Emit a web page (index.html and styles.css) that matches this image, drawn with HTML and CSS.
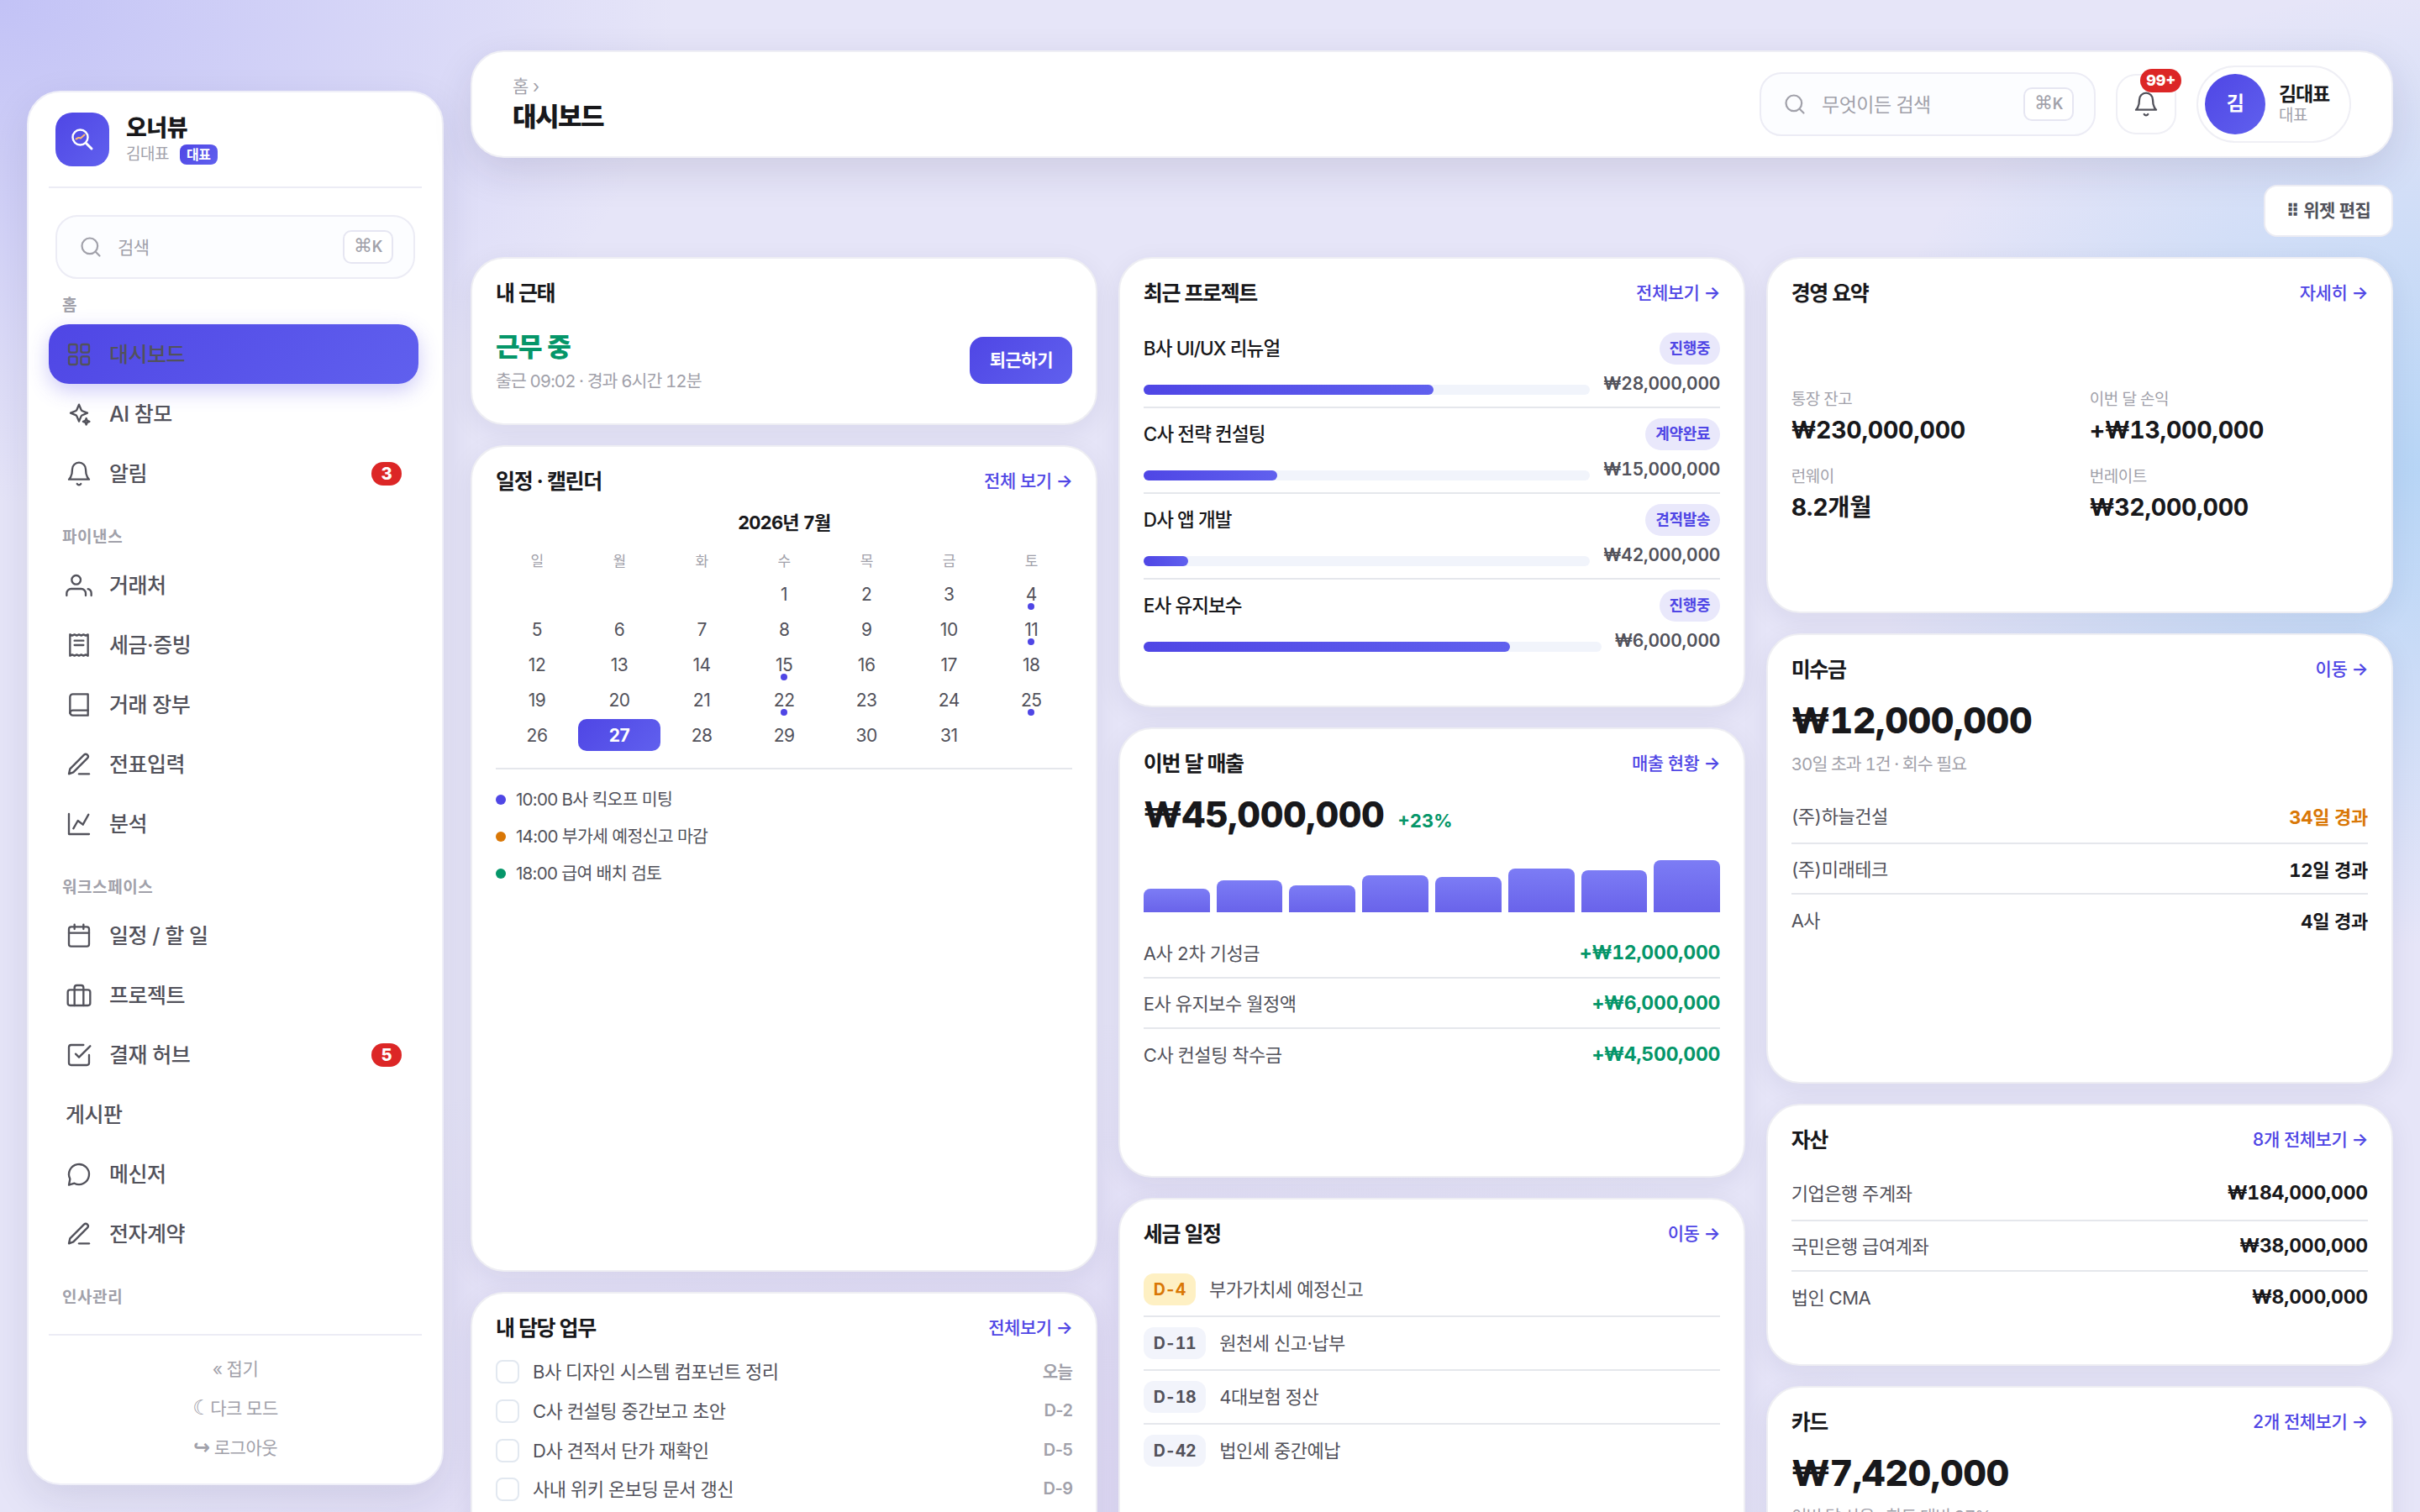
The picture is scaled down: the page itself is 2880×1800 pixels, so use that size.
FILE: index.html
```html
<!DOCTYPE html>
<html lang="ko">

<head>
    <meta charset="UTF-8">
    <meta name="viewport" content="width=device-width, initial-scale=1.0">
    <title>오너뷰 - 대시보드</title>
    <link rel="stylesheet" href="styles.css">
</head>

<body>
    <div class="app">
        <aside class="sidebar">
            <div class="brand">
                <div class="brand-logo">
                    <svg viewBox="0 0 32 32" fill="none" stroke-linecap="round" stroke-linejoin="round">
                        <circle cx="13.5" cy="13.5" r="9" stroke="#fff" stroke-width="2.4" />
                        <path d="M20.5 20.5l6.5 6.5" stroke="#fff" stroke-width="3" />
                        <path d="M8.5 15.5l3-1.6 2.5.6 4.5-4" stroke="#fdba74" stroke-width="2" />
                    </svg>
                </div>
                <div class="brand-text">
                    <div class="brand-name">오너뷰</div>
                    <div class="brand-user">김대표 <span class="role">대표</span></div>
                </div>
            </div>

            <div class="side-search">
                <svg class="search-icon" viewBox="0 0 24 24"><circle cx="11" cy="11" r="8" /><path d="m21 21-4.3-4.3" /></svg>
                <span>검색</span>
                <kbd><i>⌘</i>K</kbd>
            </div>

            <nav class="nav">
                <div class="nav-label first">홈</div>
                <a class="nav-item active">
                    <svg class="icon" viewBox="0 0 24 24"><rect x="3" y="3" width="7.2" height="7.2" rx="1.5" /><rect x="13.8" y="3" width="7.2" height="7.2" rx="1.5" /><rect x="3" y="13.8" width="7.2" height="7.2" rx="1.5" /><rect x="13.8" y="13.8" width="7.2" height="7.2" rx="1.5" /></svg>
                    <span>대시보드</span>
                </a>
                <a class="nav-item">
                    <svg class="icon" viewBox="0 0 24 24"><path d="M12 3.5l1.9 4.6a2 2 0 0 0 1.1 1.1L19.5 11 15 12.9a2 2 0 0 0-1.1 1.1L12 18.5 10.1 14A2 2 0 0 0 9 12.9L4.5 11 9 9.2a2 2 0 0 0 1.100-1.100z" /><path d="M18.500 15.800l.8 2 2 .8-2 .8-.8 2-.8-2-2-.8 2-.8z" /></svg>
                    <span>AI 참모</span>
                </a>
                <a class="nav-item">
                    <svg class="icon" viewBox="0 0 24 24"><path d="M6 8a6 6 0 0 1 12 0c0 7 3 9 3 9H3s3-2 3-9" /><path d="M10.3 21a1.94 1.94 0 0 0 3.4 0" /></svg>
                    <span>알림</span>
                    <b class="count">3</b>
                </a>

                <div class="nav-label">파이낸스</div>
                <a class="nav-item">
                    <svg class="icon" viewBox="0 0 24 24"><path d="M18 21v-2a4 4 0 0 0-4-4H5a4 4 0 0 0-4 4v2" /><circle cx="9.5" cy="7" r="4" /><path d="M23 21v-2a4 4 0 0 0-3-3.87" /></svg>
                    <span>거래처</span>
                </a>
                <a class="nav-item">
                    <svg class="icon" viewBox="0 0 24 24"><path d="M4 2.5v19l2-1 2 1 2-1 2 1 2-1 2 1 2-1 2 1v-19l-2 1-2-1-2 1-2-1-2 1-2-1-2 1z" /><path d="M8 8h8M8 12h8" /></svg>
                    <span>세금·증빙</span>
                </a>
                <a class="nav-item">
                    <svg class="icon" viewBox="0 0 24 24"><path d="M4 19.5A2.5 2.5 0 0 1 6.5 17H20" /><path d="M6.5 2.5H20v19H6.5A2.5 2.5 0 0 1 4 19V5a2.5 2.5 0 0 1 2.500-2.500z" /></svg>
                    <span>거래 장부</span>
                </a>
                <a class="nav-item">
                    <svg class="icon" viewBox="0 0 24 24"><path d="M12 20.5h9" /><path d="M16.5 3.5a2.12 2.12 0 0 1 3 3L7 19l-4 1.5 1-4.5z" /></svg>
                    <span>전표입력</span>
                </a>
                <a class="nav-item">
                    <svg class="icon" viewBox="0 0 24 24"><path d="M3 3v18h18" /><path d="m7 16 4-7 4.5 3.5L20.5 3.5" /></svg>
                    <span>분석</span>
                </a>

                <div class="nav-label">워크스페이스</div>
                <a class="nav-item">
                    <svg class="icon" viewBox="0 0 24 24"><rect x="3" y="4" width="18" height="17.5" rx="2" /><path d="M8 2v4M16 2v4M3 9.5h18" /></svg>
                    <span>일정 / 할 일</span>
                </a>
                <a class="nav-item">
                    <svg class="icon" viewBox="0 0 24 24"><rect x="2" y="7" width="20" height="14" rx="2" /><path d="M16 21V5a2 2 0 0 0-2-2h-4a2 2 0 0 0-2 2v16" /></svg>
                    <span>프로젝트</span>
                </a>
                <a class="nav-item">
                    <svg class="icon" viewBox="0 0 24 24"><path d="m9 11 3 3L22 4" /><path d="M21 12v7a2 2 0 0 1-2 2H5a2 2 0 0 1-2-2V5a2 2 0 0 1 2-2h11" /></svg>
                    <span>결재 허브</span>
                    <b class="count">5</b>
                </a>
                <a class="nav-item"><span>게시판</span></a>
                <a class="nav-item">
                    <svg class="icon" viewBox="0 0 24 24"><path d="M7.9 20A9 9 0 1 0 4 16.1L3 21.5z" /></svg>
                    <span>메신저</span>
                </a>
                <a class="nav-item">
                    <svg class="icon" viewBox="0 0 24 24"><path d="M12 20.5h9" /><path d="M16.5 3.5a2.12 2.12 0 0 1 3 3L7 19l-4 1.5 1-4.5z" /></svg>
                    <span>전자계약</span>
                </a>
                <div class="nav-label">인사관리</div>
            </nav>

            <div class="side-footer">
                <a>« 접기</a>
                <a><i class="moon">☾</i>다크 모드</a>
                <a><i class="exit">↪</i> 로그아웃</a>
            </div>
        </aside>

        <main class="main">
            <header class="topbar">
                <div class="page-title">
                    <div class="crumb">홈 ›</div>
                    <h1>대시보드</h1>
                </div>
                <div class="top-search">
                    <svg class="search-icon" viewBox="0 0 24 24"><circle cx="11" cy="11" r="8" /><path d="m21 21-4.3-4.3" /></svg>
                    <span>무엇이든 검색</span>
                    <kbd><i>⌘</i>K</kbd>
                </div>
                <div class="bell">
                    <svg class="icon" viewBox="0 0 24 24"><path d="M6 8a6 6 0 0 1 12 0c0 7 3 9 3 9H3s3-2 3-9" /><path d="M10.3 21a1.94 1.94 0 0 0 3.4 0" /></svg>
                    <b class="bell-count">99+</b>
                </div>
                <div class="profile">
                    <div class="avatar">김</div>
                    <div>
                        <div class="profile-name">김대표</div>
                        <div class="profile-role">대표</div>
                    </div>
                </div>
            </header>

            <div class="toolbar">
                <button class="edit-btn">⠿ 위젯 편집</button>
            </div>

            <div class="board">
                <div class="col">
                    <section class="card rows-2">
                        <div class="card-head"><h2>내 근태</h2></div>
                        <div class="attend">
                            <div>
                                <div class="attend-state">근무 중</div>
                                <div class="attend-sub">출근 09:02 · 경과 6시간 12분</div>
                            </div>
                            <button class="leave-btn">퇴근하기</button>
                        </div>
                    </section>

                    <section class="card rows-9">
                        <div class="card-head"><h2>일정 · 캘린더</h2><a>전체 보기 <i>→</i></a></div>
                        <div class="month">2026년 7월</div>
                        <div class="weekdays">
                            <span>일</span><span>월</span><span>화</span><span>수</span><span>목</span><span>금</span><span>토</span>
                        </div>
                        <div class="days">
                            <span></span><span></span><span></span><span>1</span><span>2</span><span>3</span><span class="has">4</span>
                            <span>5</span><span>6</span><span>7</span><span>8</span><span>9</span><span>10</span><span class="has">11</span>
                            <span>12</span><span>13</span><span>14</span><span class="has">15</span><span>16</span><span>17</span><span>18</span>
                            <span>19</span><span>20</span><span>21</span><span class="has">22</span><span>23</span><span>24</span><span class="has">25</span>
                            <span>26</span><span class="today">27</span><span>28</span><span>29</span><span>30</span><span>31</span><span></span>
                        </div>
                        <ul class="events">
                            <li><i class="dot indigo"></i><span>10:00 B사 킥오프 미팅</span></li>
                            <li><i class="dot orange"></i><span>14:00 부가세 예정신고 마감</span></li>
                            <li><i class="dot green"></i><span>18:00 급여 배치 검토</span></li>
                        </ul>
                    </section>

                    <section class="card rows-5">
                        <div class="card-head"><h2>내 담당 업무</h2><a>전체보기 <i>→</i></a></div>
                        <ul class="tasks">
                            <li><i class="box"></i><span>B사 디자인 시스템 컴포넌트 정리</span><b>오늘</b></li>
                            <li><i class="box"></i><span>C사 컨설팅 중간보고 초안</span><b>D-2</b></li>
                            <li><i class="box"></i><span>D사 견적서 단가 재확인</span><b>D-5</b></li>
                            <li><i class="box"></i><span>사내 위키 온보딩 문서 갱신</span><b>D-9</b></li>
                        </ul>
                    </section>
                </div>

                <div class="col">
                    <section class="card rows-5">
                        <div class="card-head"><h2>최근 프로젝트</h2><a>전체보기 <i>→</i></a></div>
                        <ul class="projects">
                            <li>
                                <div class="project-top"><span>B사 UI/UX 리뉴얼</span><em>진행중</em></div>
                                <div class="project-bottom">
                                    <div class="track"><div class="fill" style="width: 65%"></div></div>
                                    <b>₩28,000,000</b>
                                </div>
                            </li>
                            <li>
                                <div class="project-top"><span>C사 전략 컨설팅</span><em>계약완료</em></div>
                                <div class="project-bottom">
                                    <div class="track"><div class="fill" style="width: 30%"></div></div>
                                    <b>₩15,000,000</b>
                                </div>
                            </li>
                            <li>
                                <div class="project-top"><span>D사 앱 개발</span><em>견적발송</em></div>
                                <div class="project-bottom">
                                    <div class="track"><div class="fill" style="width: 10%"></div></div>
                                    <b>₩42,000,000</b>
                                </div>
                            </li>
                            <li>
                                <div class="project-top"><span>E사 유지보수</span><em>진행중</em></div>
                                <div class="project-bottom">
                                    <div class="track"><div class="fill" style="width: 80%"></div></div>
                                    <b>₩6,000,000</b>
                                </div>
                            </li>
                        </ul>
                    </section>

                    <section class="card rows-5">
                        <div class="card-head"><h2>이번 달 매출</h2><a>매출 현황 <i>→</i></a></div>
                        <div class="big">₩45,000,000 <small>+23%</small></div>
                        <div class="chart">
                            <div class="bar" style="height: 28px"></div>
                            <div class="bar" style="height: 38px"></div>
                            <div class="bar" style="height: 32px"></div>
                            <div class="bar" style="height: 44px"></div>
                            <div class="bar" style="height: 42px"></div>
                            <div class="bar" style="height: 52px"></div>
                            <div class="bar" style="height: 50px"></div>
                            <div class="bar" style="height: 62px"></div>
                        </div>
                        <ul class="list">
                            <li><span>A사 2차 기성금</span><b class="up">+₩12,000,000</b></li>
                            <li><span>E사 유지보수 월정액</span><b class="up">+₩6,000,000</b></li>
                            <li><span>C사 컨설팅 착수금</span><b class="up">+₩4,500,000</b></li>
                        </ul>
                    </section>

                    <section class="card rows-5">
                        <div class="card-head"><h2>세금 일정</h2><a>이동 <i>→</i></a></div>
                        <ul class="taxes">
                            <li><b class="soon">D-4</b><span>부가가치세 예정신고</span></li>
                            <li><b>D-11</b><span>원천세 신고·납부</span></li>
                            <li><b>D-18</b><span>4대보험 정산</span></li>
                            <li><b>D-42</b><span>법인세 중간예납</span></li>
                        </ul>
                    </section>
                </div>

                <div class="col">
                    <section class="card rows-4">
                        <div class="card-head"><h2>경영 요약</h2><a>자세히 <i>→</i></a></div>
                        <div class="summary">
                            <div><span>통장 잔고</span><b>₩230,000,000</b></div>
                            <div><span>이번 달 손익</span><b>+₩13,000,000</b></div>
                            <div><span>런웨이</span><b>8.2개월</b></div>
                            <div><span>번레이트</span><b>₩32,000,000</b></div>
                        </div>
                    </section>

                    <section class="card rows-5">
                        <div class="card-head"><h2>미수금</h2><a>이동 <i>→</i></a></div>
                        <div class="big">₩12,000,000</div>
                        <div class="note">30일 초과 1건 · 회수 필요</div>
                        <ul class="list tall">
                            <li><span>(주)하늘건설</span><b class="warn">34일 경과</b></li>
                            <li><span>(주)미래테크</span><b>12일 경과</b></li>
                            <li><span>A사</span><b>4일 경과</b></li>
                        </ul>
                    </section>

                    <section class="card rows-3">
                        <div class="card-head"><h2>자산</h2><a>8개 전체보기 <i>→</i></a></div>
                        <ul class="list tall">
                            <li><span>기업은행 주계좌</span><b>₩184,000,000</b></li>
                            <li><span>국민은행 급여계좌</span><b>₩38,000,000</b></li>
                            <li><span>법인 CMA</span><b>₩8,000,000</b></li>
                        </ul>
                    </section>

                    <section class="card rows-4">
                        <div class="card-head"><h2>카드</h2><a>2개 전체보기 <i>→</i></a></div>
                        <div class="big">₩7,420,000</div>
                        <div class="note">이번 달 사용 · 한도 대비 37%</div>
                    </section>
                </div>
            </div>
        </main>
    </div>
</body>

</html>
```
FILE: styles.css
```css
* {
    box-sizing: border-box;
}

body {
    margin: 0;
    height: 1800px;
    overflow: hidden;
    font-family: Inter, "Noto Sans CJK KR", "DejaVu Sans", sans-serif;
    font-variant-numeric: tabular-nums;
    letter-spacing: -0.03em;
    color: #18181b;
    background:
        radial-gradient(1150px 860px at 0 0, rgba(99, 102, 241, 0.27), rgba(99, 102, 241, 0) 70%),
        radial-gradient(900px 760px at 100% 31%, rgba(56, 170, 240, 0.27), rgba(56, 170, 240, 0) 75%),
        radial-gradient(1500px 800px at 40% 100%, rgba(139, 92, 200, 0.1), rgba(139, 92, 200, 0) 75%),
        #e6e5f8;
}

h1,
h2,
ul {
    margin: 0;
    padding: 0;
}

ul {
    list-style: none;
}

i,
em {
    font-style: normal;
}

button {
    font-family: inherit;
    letter-spacing: inherit;
}

.app {
    display: flex;
    height: 1800px;
}

.icon {
    width: 32px;
    height: 32px;
    flex: none;
    fill: none;
    stroke: currentColor;
    stroke-width: 1.75;
    stroke-linecap: round;
    stroke-linejoin: round;
}

.search-icon {
    width: 28px;
    height: 28px;
    flex: none;
    fill: none;
    stroke: currentColor;
    stroke-width: 1.9;
    stroke-linecap: round;
}

/* sidebar */
.sidebar {
    width: 496px;
    height: 1660px;
    margin: 108px 32px 0 32px;
    padding: 24px;
    flex: none;
    display: flex;
    flex-direction: column;
    background: #fff;
    border: 2px solid #efeff8;
    border-radius: 40px;
    box-shadow: 0 16px 48px rgba(30, 27, 75, 0.1);
}

.brand {
    display: flex;
    gap: 20px;
    height: 90px;
    padding-left: 8px;
    border-bottom: 2px solid #ececf5;
}

.brand-logo {
    width: 64px;
    height: 64px;
    border-radius: 20px;
    display: flex;
    align-items: center;
    justify-content: center;
    background: linear-gradient(135deg, #4f46e5, #6060ee);
}

.brand-logo svg {
    width: 32px;
    height: 32px;
}

.brand-name {
    padding-top: 1px;
    font-size: 27px;
    font-weight: 800;
    line-height: 35px;
}

.brand-user {
    display: flex;
    align-items: center;
    gap: 13px;
    font-size: 19px;
    line-height: 28px;
    color: #a1a1aa;
}

.role {
    padding: 0 8px;
    border-radius: 8px;
    font-size: 16px;
    font-weight: 700;
    line-height: 24px;
    color: #fff;
    background: linear-gradient(135deg, #4f46e5, #6060ee);
}

.side-search,
.top-search {
    display: flex;
    align-items: center;
    height: 76px;
    border: 2px solid #ececf5;
    border-radius: 26px;
    background: #fcfdff;
    color: #a1a1aa;
}

.side-search {
    margin: 32px 8px 0;
    padding: 0 24px 0 26px;
    gap: 18px;
    font-size: 21px;
}

.side-search span,
.top-search span {
    padding-bottom: 2px;
}

kbd {
    width: 60px;
    height: 40px;
    margin-left: auto;
    border: 2px solid #e6e6f2;
    border-radius: 10px;
    background: #fff;
    font: 600 18px/36px Inter, "Noto Sans CJK KR", "DejaVu Sans", sans-serif;
    letter-spacing: -0.02em;
    text-align: center;
}

kbd i {
    font-family: "DejaVu Sans", sans-serif;
    font-size: 22px;
    font-weight: 400;
    line-height: 1;
}

.nav {
    flex: 1;
}

.nav-label {
    height: 62px;
    padding: 29px 16px 0;
    font-size: 19px;
    font-weight: 700;
    line-height: 24px;
    letter-spacing: 0.03em;
    color: #a1a1aa;
}

.nav-label.first {
    height: 54px;
    padding-top: 20px;
}

.nav-item {
    display: flex;
    align-items: center;
    gap: 20px;
    height: 71px;
    margin-right: 4px;
    padding: 0 20px;
    border-radius: 24px;
    font-size: 25px;
    font-weight: 500;
    color: #52525b;
}

.nav-item span {
    padding-bottom: 3px;
}

.nav-item.active {
    background: linear-gradient(135deg, #4f46e5, #6060ee);
    box-shadow: 0 8px 24px rgba(79, 70, 229, 0.28);
}

.count {
    width: 36px;
    height: 28px;
    margin-left: auto;
    border-radius: 14px;
    background: #dc2626;
    color: #fff;
    font-size: 20px;
    font-weight: 800;
    line-height: 28px;
    text-align: center;
}

.side-footer {
    height: 154px;
    padding-top: 16px;
    border-top: 2px solid #ececf5;
    display: flex;
    flex-direction: column;
    font-size: 21px;
    line-height: 47px;
    text-align: center;
    color: #a1a1aa;
}

.moon,
.exit {
    font-family: "DejaVu Sans", sans-serif;
    font-size: 24px;
    line-height: 1;
}

.exit {
    font-weight: 700;
}

/* main */
.main {
    width: 2288px;
    padding-top: 60px;
}

.topbar {
    display: flex;
    align-items: center;
    height: 128px;
    padding: 0 48px;
    background: #fff;
    border: 2px solid #efeff5;
    border-radius: 40px;
    box-shadow: 0 16px 48px rgba(30, 27, 75, 0.12);
}

.page-title {
    flex: 1;
}

.crumb {
    font-size: 21px;
    line-height: 30px;
    color: #a1a1aa;
}

h1 {
    font-size: 31px;
    font-weight: 800;
    line-height: 42px;
    letter-spacing: -0.05em;
}

.top-search {
    width: 400px;
    padding: 0 24px 0 26px;
    gap: 18px;
    font-size: 23px;
}

.bell {
    position: relative;
    width: 72px;
    height: 72px;
    margin: 0 24px;
    border: 2px solid #efeff5;
    border-radius: 24px;
    display: flex;
    align-items: center;
    justify-content: center;
    color: #52525b;
}

.bell-count {
    position: absolute;
    top: -8px;
    right: -8px;
    padding: 0 7px;
    border-radius: 14px;
    background: #dc2626;
    color: #fff;
    font-size: 18px;
    font-weight: 800;
    line-height: 28px;
    letter-spacing: 0;
}

.profile {
    display: flex;
    align-items: center;
    gap: 16px;
    width: 184px;
    height: 92px;
    padding-left: 8px;
    border: 2px solid #efeff5;
    border-radius: 46px;
}

.avatar {
    width: 72px;
    height: 72px;
    border-radius: 50%;
    background: linear-gradient(135deg, #4f46e5, #6060ee);
    color: #fff;
    font-size: 23px;
    font-weight: 700;
    line-height: 70px;
    text-align: center;
}

.profile-name {
    font-size: 23px;
    font-weight: 700;
    line-height: 28px;
    letter-spacing: -0.05em;
}

.profile-role {
    font-size: 19px;
    line-height: 24px;
    color: #a1a1aa;
}

.toolbar {
    display: flex;
    justify-content: flex-end;
    height: 118px;
    padding-top: 32px;
}

.edit-btn {
    width: 154px;
    height: 62px;
    padding: 0 0 5px;
    border: 2px solid #ececf3;
    border-radius: 16px;
    background: #fff;
    color: #52525b;
    font-size: 21px;
    font-weight: 600;
}

/* widget board */
.board {
    display: grid;
    grid-template-columns: repeat(3, 1fr);
    gap: 24.5px;
}

.col {
    display: flex;
    flex-direction: column;
    gap: 24px;
    min-width: 0;
}

.card {
    display: flex;
    flex-direction: column;
    flex: none;
    padding: 18px 28px 28px;
    background: #fff;
    border: 2px solid #eeeef3;
    border-radius: 40px;
    box-shadow: 0 8px 32px rgba(30, 27, 75, 0.07);
}

.rows-2 {
    height: 200px;
}

.rows-3 {
    height: 312px;
}

.rows-4 {
    height: 424px;
}

.rows-5 {
    height: 536px;
}

.rows-9 {
    height: 984px;
}

.card-head {
    display: flex;
    justify-content: space-between;
    align-items: center;
    height: 42px;
    flex: none;
}

.card-head a {
    font-size: 21px;
    font-weight: 500;
    color: #4f46e5;
}

.card-head i {
    font-weight: 600;
}

h2 {
    font-size: 25px;
    font-weight: 700;
    letter-spacing: -0.055em;
}

.attend {
    display: flex;
    justify-content: space-between;
    align-items: center;
    margin-top: 22px;
}

.attend-state {
    font-size: 31px;
    font-weight: 800;
    line-height: 46px;
    letter-spacing: -0.045em;
    color: #059669;
}

.attend-sub {
    font-size: 20.5px;
    line-height: 36px;
    letter-spacing: -0.045em;
    color: #a1a1aa;
}

.leave-btn {
    width: 122px;
    height: 56px;
    margin-top: -5px;
    padding: 0 0 3px;
    border: none;
    border-radius: 16px;
    background: linear-gradient(135deg, #4f46e5, #6060ee);
    color: #fff;
    font-size: 21px;
    font-weight: 700;
}

.month {
    margin-top: 13px;
    font-size: 22px;
    font-weight: 700;
    line-height: 34px;
    letter-spacing: -0.04em;
    text-align: center;
}

.weekdays,
.days {
    display: grid;
    grid-template-columns: repeat(7, 1fr);
    text-align: center;
}

.weekdays {
    margin-top: 14px;
    font-size: 17px;
    line-height: 30px;
    color: #a1a1aa;
}

.days {
    row-gap: 4px;
    margin-top: 5px;
    padding-bottom: 20px;
    border-bottom: 2px solid #e5e7ec;
    font-size: 21px;
    letter-spacing: -0.02em;
    font-variant-numeric: normal;
    color: #52525b;
}

.days span {
    position: relative;
    height: 38px;
    line-height: 39px;
}

.days .has::after {
    content: "";
    position: absolute;
    left: 50%;
    bottom: 0;
    width: 8px;
    height: 8px;
    margin-left: -4px;
    border-radius: 50%;
    background: #4f46e5;
}

.days .today {
    border-radius: 10px;
    background: linear-gradient(135deg, #4f46e5, #6060ee);
    color: #fff;
    font-weight: 700;
}

.events {
    margin-top: 14px;
    font-size: 20.5px;
    letter-spacing: -0.035em;
    font-variant-numeric: normal;
    color: #52525b;
}

.events li {
    display: flex;
    align-items: center;
    gap: 12px;
    height: 44px;
}

.events span {
    padding-bottom: 4px;
}

.dot {
    width: 12px;
    height: 12px;
    border-radius: 50%;
}

.indigo {
    background: #4f46e5;
}

.orange {
    background: #d97706;
}

.green {
    background: #059669;
}

.tasks {
    margin-top: 10px;
}

.tasks li {
    display: flex;
    align-items: center;
    height: 46.67px;
    font-size: 22px;
    color: #52525b;
}

.tasks span {
    padding-bottom: 4px;
}

.tasks b {
    margin-left: auto;
    padding-bottom: 2px;
    font-size: 20px;
    font-weight: 600;
    letter-spacing: -0.03em;
    font-variant-numeric: normal;
    color: #a1a1aa;
}

.box {
    width: 28px;
    height: 28px;
    margin-right: 16px;
    border: 2px solid #e2e8f0;
    border-radius: 8px;
}

.projects {
    margin-top: 16px;
}

.projects li {
    padding: 12px 0;
    border-bottom: 2px solid #e5e7ec;
}

.projects li:last-child,
.list li:last-child,
.taxes li:last-child {
    border-bottom: none;
}

.project-top {
    display: flex;
    justify-content: space-between;
    align-items: center;
    height: 38px;
    font-size: 22.5px;
    font-weight: 500;
    letter-spacing: -0.04em;
}

.project-top span {
    padding-bottom: 4px;
}

.project-top em {
    padding: 0 12px;
    border-radius: 19px;
    background: #e9e8fb;
    color: #4f46e5;
    font-size: 18px;
    font-weight: 700;
    line-height: 37px;
    height: 38px;
    letter-spacing: -0.02em;
}

.project-bottom {
    display: flex;
    gap: 16px;
    height: 38px;
}

.project-bottom b {
    margin-top: 6px;
    font-size: 21px;
    font-weight: 600;
    line-height: 34px;
    letter-spacing: -0.01em;
    color: #52525b;
}

.track {
    flex: 1;
    height: 12px;
    margin-top: 24px;
    border-radius: 6px;
    background: #f1f4fb;
}

.fill {
    height: 12px;
    border-radius: 6px;
    background: linear-gradient(90deg, #4f46e5, #6060ee);
}

.big {
    margin-top: 13px;
    font-size: 43px;
    font-weight: 800;
    line-height: 56px;
    letter-spacing: -0.01em;
}

.big small {
    margin-left: 5px;
    font-size: 22px;
    font-weight: 700;
    letter-spacing: 0;
    color: #059669;
}

.note {
    margin-top: 8px;
    font-size: 20.5px;
    line-height: 34px;
    letter-spacing: -0.045em;
    color: #a1a1aa;
}

.chart {
    display: flex;
    align-items: flex-end;
    gap: 8px;
    height: 64px;
    margin-top: 17px;
}

.bar {
    flex: 1;
    border-radius: 8px 8px 0 0;
    background: linear-gradient(180deg, #7c7cf5, #6963ea);
}

.list {
    margin-top: 19px;
}

.list.tall {
    margin-top: 16px;
}

.list li {
    display: flex;
    justify-content: space-between;
    align-items: center;
    height: 60px;
    padding-bottom: 1px;
    border-bottom: 2px solid #e5e7ec;
    font-size: 22px;
    color: #52525b;
}

.list.tall li:first-child {
    height: 62px;
    padding-bottom: 4px;
}

.list span {
    padding-bottom: 2px;
}

.list b {
    font-size: 23px;
    font-weight: 700;
    color: #18181b;
    letter-spacing: -0.01em;
}

.note + .list b {
    font-size: 22px;
}

.list .up {
    color: #059669;
}

.list .warn {
    color: #d97706;
}

.taxes {
    margin-top: 16px;
}

.taxes li {
    display: flex;
    align-items: center;
    gap: 16px;
    padding: 12px 0;
    border-bottom: 2px solid #e5e7ec;
    font-size: 22px;
    line-height: 38px;
    color: #52525b;
}

.taxes b {
    padding: 0 12px;
    border-radius: 12px;
    background: #f2f4fb;
    font-size: 19.5px;
    font-weight: 700;
    letter-spacing: -0.02em;
}

.taxes .soon {
    background: #fef0c3;
    color: #d97706;
}

.summary {
    flex: 1;
    display: grid;
    grid-template-columns: 1fr 1fr;
    align-content: center;
    gap: 21px 24px;
    padding-top: 17px;
}

.summary span {
    display: block;
    font-size: 19px;
    line-height: 30px;
    color: #a1a1aa;
}

.summary b {
    display: block;
    font-size: 28.5px;
    font-weight: 700;
    line-height: 41px;
    letter-spacing: -0.01em;
}
```
